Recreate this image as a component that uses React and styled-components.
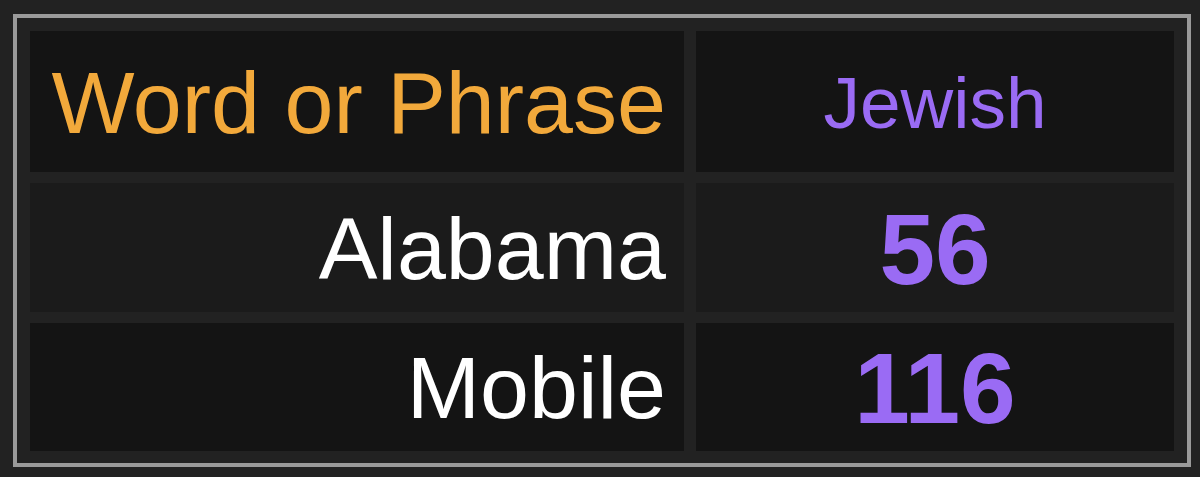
import React from "react";
import styled, { createGlobalStyle } from "styled-components";

const Global = createGlobalStyle`
  html, body {
    margin: 0;
    padding: 0;
    background: #222222;
  }
  body {
    font-family: "Liberation Sans", Arial, Helvetica, sans-serif;
  }
`;

const Page = styled.div`
  padding: 14px 9px 10px 13px;
`;

const Table = styled.div`
  display: grid;
  grid-template-columns: 654px 478px;
  grid-template-rows: 141px 129px 128px;
  column-gap: 12px;
  row-gap: 11px;
  padding: 13px 13px 12px 13px;
  border: 4px solid #9a9a9a;
  background: #222222;
  width: max-content;
`;

const Cell = styled.div`
  display: flex;
  align-items: center;
  justify-content: ${(p) => (p.$align === "right" ? "flex-end" : "center")};
  padding: ${(p) => (p.$align === "right" ? "2px 18px 0 0" : "2px 0 0 0")};
  background: ${(p) => (p.$alt ? "#1b1b1b" : "#141414")};
  color: ${(p) => p.$color || "#ffffff"};
  font-size: ${(p) => p.$size || 88}px;
  font-weight: ${(p) => (p.$bold ? 700 : 400)};
  line-height: 1;
  white-space: nowrap;
`;

const rows = [
  { word: "Alabama", value: 56 },
  { word: "Mobile", value: 116 },
];

export default function App() {
  return (
    <Page>
      <Global />
      <Table>
        <Cell $align="right" $color="#f2a93b" $size={88}>
          Word or Phrase
        </Cell>
        <Cell $color="#9a6bf4" $size={73}>
          Jewish
        </Cell>
        {rows.map((r, i) => (
          <React.Fragment key={r.word}>
            <Cell $align="right" $alt={i % 2 === 0} $size={88}>
              {r.word}
            </Cell>
            <Cell $alt={i % 2 === 0} $color="#9a6bf4" $size={100} $bold>
              {r.value}
            </Cell>
          </React.Fragment>
        ))}
      </Table>
    </Page>
  );
}
